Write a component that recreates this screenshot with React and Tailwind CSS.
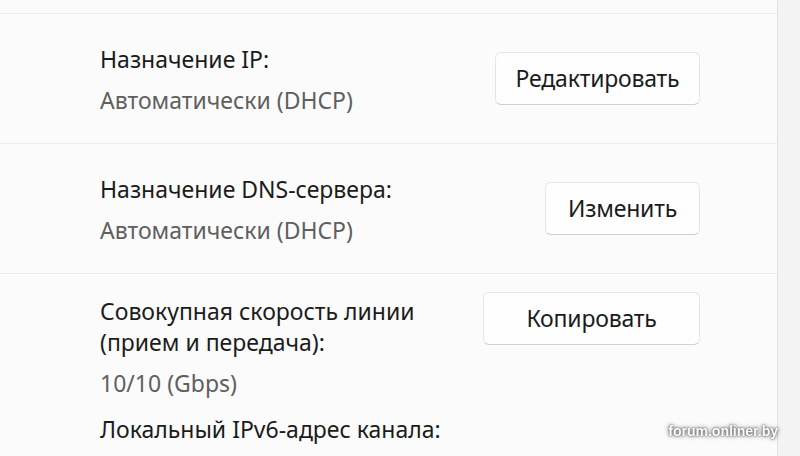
import React from 'react'

const font = { fontFamily: '"Noto Sans", "Open Sans", sans-serif' }

const Btn = ({ w, children }) => (
    <button className={`${w} h-[53px] bg-[#fefefe] border border-[#e6e6e6] border-b-[#cfcfcf] rounded-[6px] text-[23px] leading-[31px] text-[#1b1b1b] tracking-[-0.2px]`}>
        {children}
    </button>
)

const Row = ({ label, value, button }) => (
    <div className="h-[130px] flex items-center justify-between pl-[100px] pr-[77px] border-b border-[#ebebeb]">
        <div className="flex flex-col pt-[2px]">
            <span className="text-[23px] leading-[31px] text-[#1b1b1b]">{label}</span>
            <span className="text-[23px] leading-[31px] mt-[10px] text-[#5f5f5f]">{value}</span>
        </div>
        {button}
    </div>
)

export default function App() {
    return (
        <div className="w-[800px] h-[456px] overflow-hidden bg-[#f3f3f3] flex relative" style={font}>
            <div className="w-[778px] h-full bg-[#fbfbfb] border-r border-[#e3e3e3] flex flex-col">
                <div className="h-[14px] border-b border-[#ebebeb]" />
                <Row label="Назначение IP:" value="Автоматически (DHCP)" button={<Btn w="w-[205px]">Редактировать</Btn>} />
                <Row label="Назначение DNS-сервера:" value="Автоматически (DHCP)" button={<Btn w="w-[155px]">Изменить</Btn>} />
                <div className="flex justify-between pl-[100px] pr-[77px]">
                    <div className="flex flex-col pt-[22px]">
                        <span className="text-[23px] leading-[31px] text-[#1b1b1b]">Совокупная скорость линии</span>
                        <span className="text-[23px] leading-[31px] text-[#1b1b1b]">(прием и передача):</span>
                        <span className="text-[23px] leading-[31px] mt-[10px] text-[#5f5f5f]">10/10 (Gbps)</span>
                        <span className="text-[23px] leading-[31px] mt-[15px] text-[#1b1b1b]">Локальный IPv6-адрес канала:</span>
                    </div>
                    <div className="pt-[18px]">
                        <Btn w="w-[217px]">Копировать</Btn>
                    </div>
                </div>
            </div>
            <span className="absolute right-[22px] bottom-[14px] text-[14px] font-bold text-white [text-shadow:0_0_2px_rgba(0,0,0,0.8),0_0_5px_rgba(0,0,0,0.55)]" style={{ fontFamily: '"Liberation Sans", sans-serif' }}>
                forum.onliner.by
            </span>
        </div>
    )
}
